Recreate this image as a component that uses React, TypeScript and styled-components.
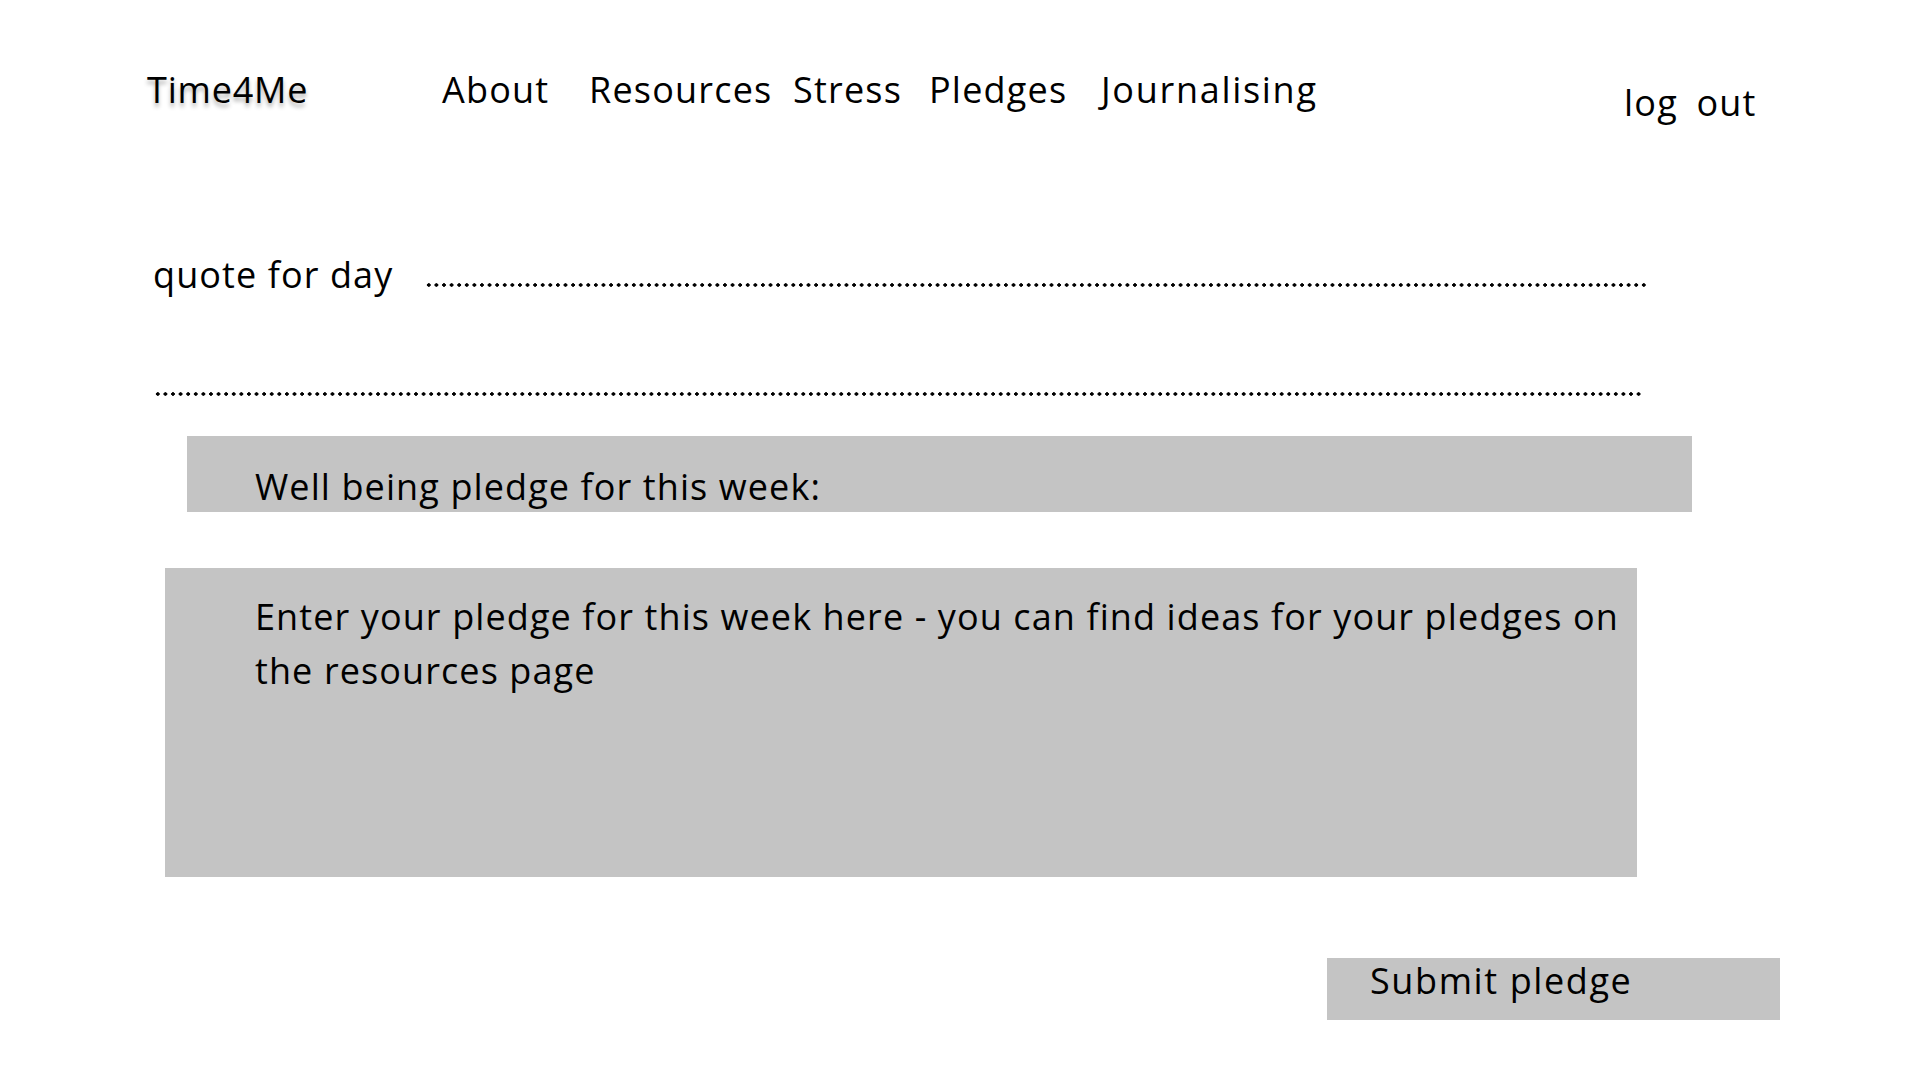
import {styled, createGlobalStyle} from "styled-components";

const GlobalStyle = createGlobalStyle`
    body {
        margin: 0;
        background: #ffffff;
        font-family: "Open Sans", "Noto Sans", sans-serif;
        color: #000000;
    }
`;

const StyledPage = styled.div`
    width: 1920px;
    height: 1080px;
    display: flex;
    flex-direction: column;
    overflow: hidden;
`;

const StyledHeader = styled.header`
    display: grid;
    grid-template-columns: 295px 147px 204px 136px 172px 523px auto;
    align-items: start;
    padding: 72px 0 0 147px;
    font-size: 36px;
    line-height: 36px;
    letter-spacing: 1.2px;
`;

const StyledLogo = styled.div`
    letter-spacing: 0.8px;
    text-shadow: 0 4px 4px rgba(0, 0, 0, 0.3);
`;

const StyledNavLink = styled.a<{ $spacing?: number }>`
    color: #000;
    text-decoration: none;
    white-space: nowrap;
    letter-spacing: ${p => p.$spacing ?? 1.2}px;
`;

const StyledLogout = styled.a`
    margin-top: 13px;
    color: #000;
    text-decoration: none;
    word-spacing: 8px;
    white-space: nowrap;
`;

const StyledQuoteRow = styled.div`
    display: grid;
    grid-template-columns: 272px 1223px;
    align-items: end;
    margin: 136px 0 0 153px;
`;

const StyledQuoteLabel = styled.span`
    font-size: 36px;
    line-height: 36px;
    letter-spacing: 1.1px;
    white-space: nowrap;
`;

const StyledDots = styled.div<{ $width: number }>`
    width: ${p => p.$width}px;
    height: 4px;
    background-image: radial-gradient(circle, #000 1.5px, transparent 2px);
    background-size: 7.6px 4px;
    background-repeat: repeat-x;
`;

const StyledQuoteDots = styled(StyledDots)`
    margin-bottom: 6px;
`;

const StyledSecondDots = styled(StyledDots)`
    margin: 99px 0 0 154px;
`;

const StyledPledgeTitle = styled.div`
    margin: 40px 0 0 187px;
    width: 1505px;
    height: 76px;
    box-sizing: border-box;
    padding: 33px 0 0 68px;
    background: #c4c4c4;
    font-size: 36px;
    line-height: 36px;
    letter-spacing: 1.1px;
`;

const StyledPledgeInput = styled.div`
    margin: 56px 0 0 165px;
    width: 1472px;
    height: 309px;
    box-sizing: border-box;
    padding: 22px 6px 0 90px;
    background: #c4c4c4;
    font-size: 36px;
    line-height: 54px;
    letter-spacing: 1.1px;
`;

const StyledSubmit = styled.button`
    margin: 81px 0 0 1327px;
    width: 453px;
    height: 62px;
    box-sizing: border-box;
    padding: 0 0 16px 43px;
    border: none;
    background: #c4c4c4;
    font-family: inherit;
    font-size: 36px;
    line-height: 36px;
    letter-spacing: 1.6px;
    text-align: left;
    color: #000;
`;

export default function App() {
    return (
        <StyledPage>
            <GlobalStyle/>
            <StyledHeader>
                <StyledLogo>Time4Me</StyledLogo>
                <StyledNavLink href="#">About</StyledNavLink>
                <StyledNavLink href="#">Resources</StyledNavLink>
                <StyledNavLink href="#">Stress</StyledNavLink>
                <StyledNavLink href="#">Pledges</StyledNavLink>
                <StyledNavLink href="#" $spacing={1.7}>Journalising</StyledNavLink>
                <StyledLogout href="#">log out</StyledLogout>
            </StyledHeader>
            <StyledQuoteRow>
                <StyledQuoteLabel>quote for day</StyledQuoteLabel>
                <StyledQuoteDots $width={1223}/>
            </StyledQuoteRow>
            <StyledSecondDots $width={1487}/>
            <StyledPledgeTitle>Well being pledge for this week:</StyledPledgeTitle>
            <StyledPledgeInput>
                Enter your pledge for this week here - you can find ideas for your pledges on the resources page
            </StyledPledgeInput>
            <StyledSubmit>Submit pledge</StyledSubmit>
        </StyledPage>
    )
};
